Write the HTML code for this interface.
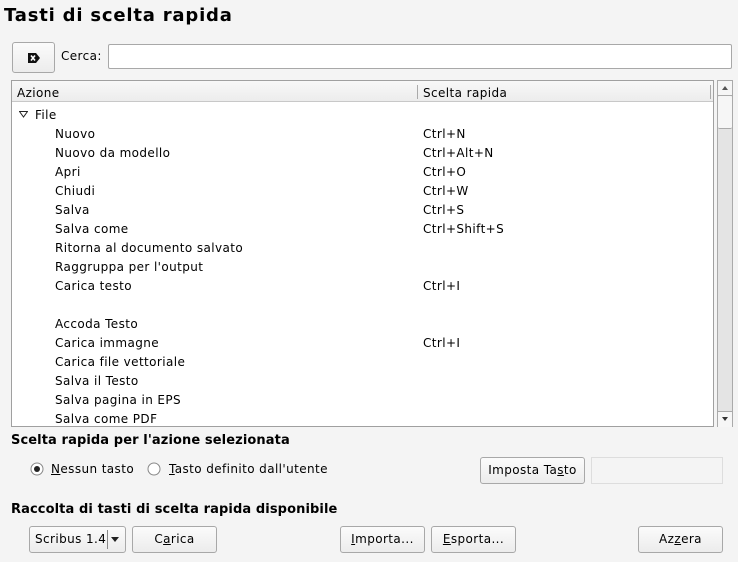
<!DOCTYPE html>
<html><head><style>
body{margin:0;width:738px;height:562px;background:#f4f4f4;font-family:"DejaVu Sans","Liberation Sans",sans-serif;font-size:12px;letter-spacing:0.4px;color:#000;position:relative;overflow:hidden}
.a{position:absolute;white-space:nowrap}
.btn{position:absolute;border:1px solid #a8a8a8;border-radius:3px;background:linear-gradient(#fbfbfb,#ececec);box-sizing:border-box;text-align:center}
.row{position:absolute;height:19px;line-height:19px}
</style></head><body>
<div class="a" style="left:4px;top:3px;font-size:18px;font-weight:bold;line-height:26px;letter-spacing:0.8px">Tasti di scelta rapida</div>
<div class="btn" style="left:12px;top:42px;width:43px;height:31px"><svg width="14" height="12" style="position:absolute;left:14px;top:9px" viewBox="0 0 14 12"><path d="M1 1H9L13 6L9 11H1Z" fill="#111"/><path d="M4 3.5L8 8.5M8 3.5L4 8.5" stroke="#fff" stroke-width="1.6"/></svg></div>
<div class="a" style="left:61px;top:49px">Cerca:</div>
<div class="a" style="left:108px;top:44px;width:624px;height:25px;background:#fff;border:1px solid #a8a8a8;box-sizing:border-box;border-radius:2px"></div>
<div class="a" style="left:11px;top:80px;width:703px;height:347px;background:#fff;border:1px solid #a0a0a0;box-sizing:border-box"></div>
<div class="a" style="left:12px;top:81px;width:701px;height:21px;background:linear-gradient(#f8f8f8,#ececec);border-bottom:1px solid #c8c8c8;box-sizing:border-box"></div>
<div class="a" style="left:17px;top:86px">Azione</div>
<div class="a" style="left:417px;top:85px;width:1px;height:14px;background:#aaa"></div>
<div class="a" style="left:423px;top:86px">Scelta rapida</div>
<div class="a" style="left:710px;top:85px;width:1px;height:14px;background:#aaa"></div>
<svg class="a" style="left:19px;top:111px" width="9" height="7"><path d="M0.5 0.5H8.5L4.5 6Z" fill="none" stroke="#222"/></svg>
<div class="row" style="left:35px;top:106px">File</div>
<div class="row" style="left:55px;top:125px">Nuovo</div><div class="row" style="left:423px;top:125px">Ctrl+N</div>
<div class="row" style="left:55px;top:144px">Nuovo da modello</div><div class="row" style="left:423px;top:144px">Ctrl+Alt+N</div>
<div class="row" style="left:55px;top:163px">Apri</div><div class="row" style="left:423px;top:163px">Ctrl+O</div>
<div class="row" style="left:55px;top:182px">Chiudi</div><div class="row" style="left:423px;top:182px">Ctrl+W</div>
<div class="row" style="left:55px;top:201px">Salva</div><div class="row" style="left:423px;top:201px">Ctrl+S</div>
<div class="row" style="left:55px;top:220px">Salva come</div><div class="row" style="left:423px;top:220px">Ctrl+Shift+S</div>
<div class="row" style="left:55px;top:239px">Ritorna al documento salvato</div>
<div class="row" style="left:55px;top:258px">Raggruppa per l'output</div>
<div class="row" style="left:55px;top:277px">Carica testo</div><div class="row" style="left:423px;top:277px">Ctrl+I</div>
<div class="row" style="left:55px;top:315px">Accoda Testo</div>
<div class="row" style="left:55px;top:334px">Carica immagne</div><div class="row" style="left:423px;top:334px">Ctrl+I</div>
<div class="row" style="left:55px;top:353px">Carica file vettoriale</div>
<div class="row" style="left:55px;top:372px">Salva il Testo</div>
<div class="row" style="left:55px;top:391px">Salva pagina in EPS</div>
<div class="row" style="left:55px;top:410px;height:16px;overflow:hidden">Salva come PDF</div>
<div class="a" style="left:717px;top:80px;width:16px;height:347px;background:#e4e4e4;border:1px solid #aaa;box-sizing:border-box"></div>
<div class="a" style="left:718px;top:81px;width:14px;height:14px;background:#f6f6f6;border-bottom:1px solid #aaa"><svg width="14" height="14"><path d="M4 9H10L7 5Z" fill="#555"/></svg></div>
<div class="a" style="left:718px;top:96px;width:14px;height:32px;background:#f6f6f6;border-bottom:1px solid #aaa;border-radius:2px"></div>
<div class="a" style="left:718px;top:411px;width:14px;height:15px;background:#f6f6f6;border-top:1px solid #aaa"><svg width="14" height="14"><path d="M4 5H10L7 9Z" fill="#333"/></svg></div>
<div class="a" style="left:11px;top:433px;font-weight:bold;font-size:13px;letter-spacing:0.1px">Scelta rapida per l'azione selezionata</div>
<svg class="a" style="left:30px;top:462px" width="14" height="14"><circle cx="7" cy="7" r="6" fill="#fff" stroke="#888"/><circle cx="7" cy="7" r="3" fill="#222"/></svg>
<div class="a" style="left:51px;top:462px"><u>N</u>essun tasto</div>
<svg class="a" style="left:147px;top:462px" width="14" height="14"><circle cx="7" cy="7" r="6" fill="#fff" stroke="#888"/></svg>
<div class="a" style="left:169px;top:462px"><u>T</u>asto definito dall'utente</div>
<div class="btn" style="left:480px;top:457px;width:105px;height:27px;line-height:25px">Imposta Ta<u>s</u>to</div>
<div class="a" style="left:591px;top:457px;width:132px;height:27px;border:1px solid #ddd;box-sizing:border-box;background:#f4f4f4"></div>
<div class="a" style="left:11px;top:502px;font-weight:bold;font-size:13px;letter-spacing:0.1px">Raccolta di tasti di scelta rapida disponibile</div>
<div class="btn" style="left:29px;top:526px;width:97px;height:27px;line-height:25px;text-align:left;padding-left:5px">Scribus 1.4</div>
<div class="a" style="left:107px;top:530px;width:1px;height:19px;background:#888"></div>
<svg class="a" style="left:111px;top:537px" width="8" height="5"><path d="M0 0H8L4 5Z" fill="#222"/></svg>
<div class="btn" style="left:132px;top:526px;width:85px;height:27px;line-height:25px">C<u>a</u>rica</div>
<div class="btn" style="left:340px;top:526px;width:85px;height:27px;line-height:25px"><u>I</u>mporta...</div>
<div class="btn" style="left:431px;top:526px;width:85px;height:27px;line-height:25px"><u>E</u>sporta...</div>
<div class="btn" style="left:638px;top:526px;width:85px;height:27px;line-height:25px">Az<u>z</u>era</div>
</body></html>
